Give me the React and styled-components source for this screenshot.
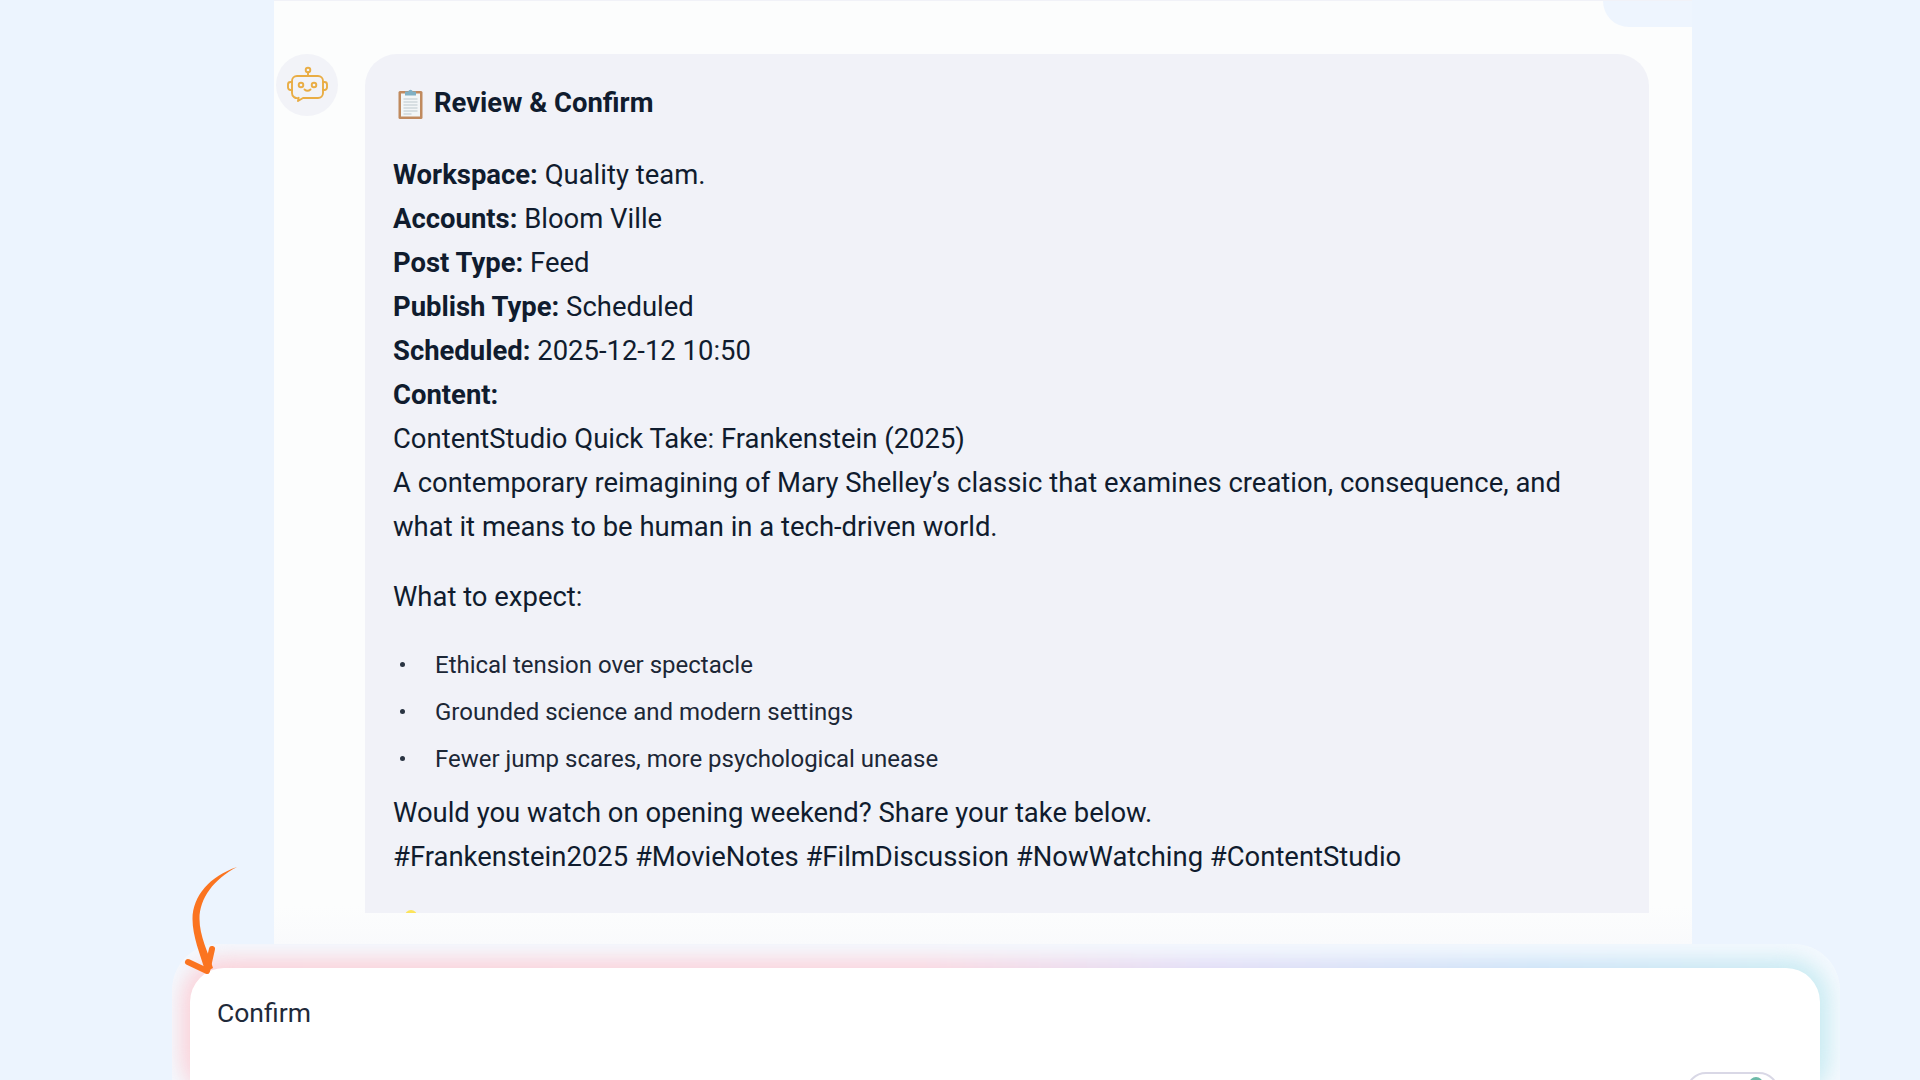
import styled, { createGlobalStyle } from 'styled-components';

const GlobalStyle = createGlobalStyle`
  html, body {
    margin: 0;
    height: 100%;
    overflow: hidden;
    background: #ecf4fe;
  }
  * {
    box-sizing: border-box;
  }
`;

const Page = styled.div`
  position: relative;
  width: 1920px;
  height: 1080px;
  overflow: hidden;
  background: #ecf4fe;
  font-family: Roboto, "Liberation Sans", sans-serif;
  color: #101c2e;
`;

const ChatPanel = styled.div`
  position: relative;
  width: 1418px;
  height: 944px;
  margin-left: 274px;
  padding-top: 53px;
  background: linear-gradient(to bottom, #fcfdfd 96%, #f9fafc 100%);
  border-top: 1px solid #f1f2f8;
  display: flex;
`;

/* corner of the user's previous message, cut off by the top of the frame */
const PrevMessage = styled.div`
  position: absolute;
  top: 0;
  right: 0;
  width: 89px;
  height: 26px;
  background: #eef5fe;
  border-bottom-left-radius: 26px;
`;

const Avatar = styled.div`
  flex: none;
  width: 62px;
  height: 62px;
  margin-left: 2px;
  border-radius: 50%;
  background: #f2f3f8;
  display: flex;
  align-items: center;
  justify-content: center;
`;

const Bubble = styled.div`
  width: 1284px;
  height: 859px;
  margin-left: 27px;
  padding: 27px 28px 0;
  background: #f1f2f8;
  border-radius: 32px 32px 0 0;
  overflow: hidden;
`;

const Heading = styled.div`
  display: flex;
  align-items: center;
  gap: 11px;
  height: 44px;
  margin-bottom: 28px;
  padding-left: 5px;
  font-size: 27.45px;
  font-weight: 700;
  line-height: 44px;
`;

const Line = styled.div`
  font-size: 27.45px;
  line-height: 44px;
  font-weight: 400;
  white-space: nowrap;
`;

const Gap = styled.div`
  height: ${(p) => p.$h}px;
`;

const BulletList = styled.ul`
  list-style: none;
  margin: 0;
  padding: 0;
`;

const Bullet = styled.li`
  display: flex;
  align-items: center;
  height: 47px;
  font-size: 24px;
  color: #1c2736;

  &::before {
    content: '';
    width: 5px;
    height: 5px;
    margin: 0 30px 0 7px;
    border-radius: 50%;
    background: #2a3442;
  }
`;

const NextEmoji = styled.div`
  width: 12px;
  height: 12px;
  margin: 31px 0 0 12px;
  border-radius: 50%;
  background: #fce45a;
`;

const Arrow = styled.svg`
  position: absolute;
  left: 180px;
  top: 864px;
  z-index: 3;
`;

const Glow = styled.div`
  position: relative;
  width: 1668px;
  height: 136px;
  margin-left: 172px;
  padding: 24px 20px 0 18px;
  border-radius: 46px 46px 0 0;
  background: rgba(255, 255, 255, 0.45);
  overflow: hidden;

  &::before {
    content: '';
    position: absolute;
    inset: 14px 10px -20px 9px;
    border-radius: 44px;
    background: linear-gradient(90deg, #fbd3da 0%, #fbd6df 45%, #e2dcf6 62%, #cde3f7 82%, #cbecf2 100%);
    filter: blur(10px);
  }
`;

const Composer = styled.div`
  position: relative;
  height: 140px;
  padding: 25px 0 0 27px;
  background: #ffffff;
  border-radius: 34px 34px 0 0;
  font-size: 26.5px;
  line-height: 40px;
  color: #1f2a3a;
`;

const SendPill = styled.div`
  position: absolute;
  right: 41px;
  top: 104px;
  width: 93px;
  height: 40px;
  border: 2px solid #d9d8e6;
  border-radius: 20px;

  &::after {
    content: '';
    position: absolute;
    top: 3px;
    right: 14px;
    width: 14px;
    height: 14px;
    border-radius: 50%;
    background: #6db9a8;
  }
`;

const RobotIcon = () => (
  <svg width="42" height="42" viewBox="0 0 42 42" fill="none" stroke="#e9ad45" strokeWidth="1.900" strokeLinecap="round" strokeLinejoin="round">
    <circle cx="22" cy="6" r="2.300" />
    <path d="M22 8.300V12" />
    <path d="M11 12h21a5 5 0 0 1 5 5v12a5 5 0 0 1-5 5H17l-5 3 .6-3.200A5 5 0 0 1 6 29V17a5 5 0 0 1 5-5z" />
    <path d="M6 18H4.500A2.500 2.500 0 0 0 2 20.500v3A2.500 2.500 0 0 0 4.500 26H6" />
    <path d="M37 18h1.500a2.500 2.500 0 0 1 2.500 2.500v3a2.500 2.500 0 0 1-2.500 2.500H37" />
    <circle cx="15" cy="21" r="2.300" />
    <circle cx="28" cy="21" r="2.300" />
    <path d="M18.500 25.500c1.800 1.600 4.200 1.600 6 0" />
  </svg>
);

const ClipboardIcon = () => (
  <svg width="25" height="32" viewBox="0 0 25 32">
    <rect x="0.500" y="4" width="24" height="28" rx="1.500" fill="#c08a5e" />
    <rect x="3" y="6.500" width="19" height="23" fill="#f2f6f7" />
    <path d="M5.500 12h14M5.500 15h14M5.500 18h14M5.500 21h14M5.500 24h14M5.500 27h8" stroke="#bcc8ce" strokeWidth="1.100" />
    <path d="M7 8.500V4.500h3.200a2.400 2.400 0 0 1 4.600 0H18v4z" fill="#7fb0c4" />
  </svg>
);

const App = () => (
  <>
    <GlobalStyle />
    <Page>
      <ChatPanel>
        <PrevMessage />
        <Avatar>
          <RobotIcon />
        </Avatar>
        <Bubble>
          <Heading>
            <ClipboardIcon />
            Review &amp; Confirm
          </Heading>
          <Line><b>Workspace:</b> Quality team.</Line>
          <Line><b>Accounts:</b> Bloom Ville</Line>
          <Line><b>Post Type:</b> Feed</Line>
          <Line><b>Publish Type:</b> Scheduled</Line>
          <Line><b>Scheduled:</b> 2025-12-12 10:50</Line>
          <Line><b>Content:</b></Line>
          <Line>ContentStudio Quick Take: Frankenstein (2025)</Line>
          <Line>A contemporary reimagining of Mary Shelley’s classic that examines creation, consequence, and</Line>
          <Line>what it means to be human in a tech-driven world.</Line>
          <Gap $h={26} />
          <Line>What to expect:</Line>
          <Gap $h={22} />
          <BulletList>
            <Bullet>Ethical tension over spectacle</Bullet>
            <Bullet>Grounded science and modern settings</Bullet>
            <Bullet>Fewer jump scares, more psychological unease</Bullet>
          </BulletList>
          <Gap $h={9} />
          <Line>Would you watch on opening weekend? Share your take below.</Line>
          <Line>#Frankenstein2025 #MovieNotes #FilmDiscussion #NowWatching #ContentStudio</Line>
          <NextEmoji />
        </Bubble>
      </ChatPanel>
      <Glow>
        <Composer>
          Confirm
          <SendPill />
        </Composer>
      </Glow>
      <Arrow width="70" height="120" viewBox="0 0 70 120">
        <path d="M57 3C30 12 12.500 32 12.500 55C12.500 72 20 90 25.500 108L33 104C28 88 19.500 72 19.500 55C19.500 34 34 15 57 3z" fill="#fb7420" />
        <path d="M8 98L27 107L32 85" fill="none" stroke="#fb7420" strokeWidth="6" strokeLinecap="round" strokeLinejoin="round" />
      </Arrow>
    </Page>
  </>
);

export default App;
